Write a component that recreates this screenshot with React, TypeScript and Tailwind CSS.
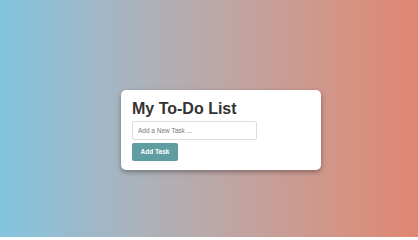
import React, { useState } from 'react';

export default function App() {
  const [task, setTask] = useState('');

  return (
    <div
      className="min-h-[237px] w-full bg-gradient-to-r from-[#82c4df] to-[#e08670] flex justify-center items-start pt-[90px] pl-[24px]"
      style={{ fontFamily: '"Liberation Sans", Arial, sans-serif' }}
    >
      {/* Card */}
      <div className="w-[200px] bg-white rounded-[5px] shadow-[0_2px_5px_rgba(0,0,0,0.35)] px-[11px] pt-[10px] pb-[9px]">
        <h1 className="text-[16px] leading-[18px] font-bold text-[#333]">My To-Do List</h1>
        <input
          value={task}
          onChange={(e) => setTask(e.target.value)}
          placeholder="Add a New Task ..."
          className="mt-[3px] block w-[125px] h-[19px] border border-[#dddddd] rounded-[2px] px-[5px] text-[6.5px] text-[#333] placeholder:text-[#777] outline-none"
        />
        <button className="mt-[3px] block w-[46px] h-[18px] bg-[#5f9ea0] rounded-[2px] text-white text-[6.5px] font-bold">
          Add Task
        </button>
      </div>
    </div>
  );
}
